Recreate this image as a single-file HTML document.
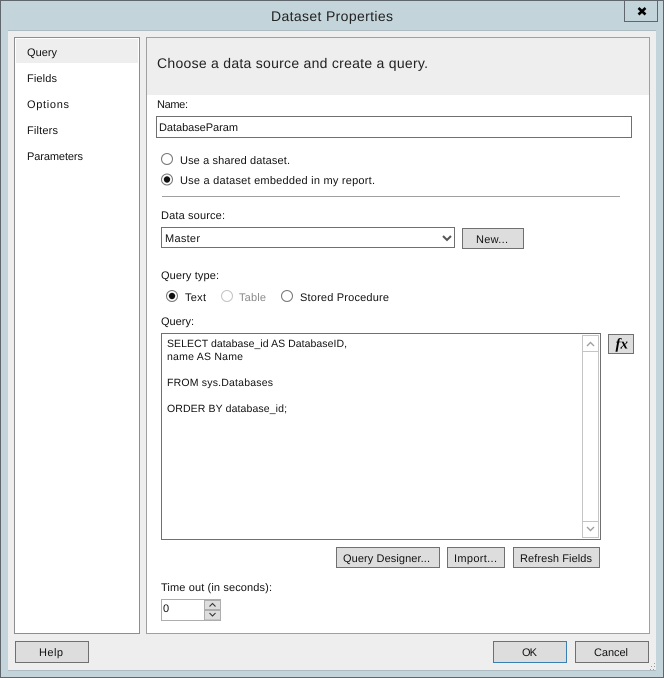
<!DOCTYPE html>
<html><head><meta charset="utf-8"><style>
html,body{margin:0;padding:0;background:#c3d5db}
svg{display:block}
text{font-family:"Liberation Sans",sans-serif;font-size:11px;fill:#111}
.t{font-size:14px;fill:#222}
.g{fill:#8a8a8a}
.b{fill:#ddd;stroke:#707070;stroke-width:1}
.f{fill:#fff;stroke:#707070;stroke-width:1}
</style></head><body>
<svg width="664" height="678" viewBox="0 0 664 678" xmlns="http://www.w3.org/2000/svg" text-rendering="geometricPrecision">
<rect x="0.5" y="0.5" width="663" height="677" fill="#c3d5db" stroke="#5f666c"/>
<rect x="8" y="30" width="648" height="640" fill="#eee"/>
<path d="M8 30.5H656M8 670.5H656" stroke="#aebcc2" fill="none"/>
<text class="t" x="271" y="21" textLength="122" lengthAdjust="spacing">Dataset Properties</text>
<rect x="624.5" y="0.5" width="33" height="21" fill="#c3d5db" stroke="#5f666c"/>
<path d="M638.500 8L645.500 14.500M645.500 8L638.500 14.500" stroke="#000" stroke-width="2.600" fill="none"/>

<rect x="14.5" y="37.5" width="125" height="596" fill="#fff" stroke="#8e8e8e"/>
<rect x="16" y="39" width="122" height="24" fill="#eee"/>
<text x="27" y="56" textLength="30">Query</text>
<text x="27" y="82" textLength="30">Fields</text>
<text x="27" y="108" textLength="42">Options</text>
<text x="27" y="134" textLength="31">Filters</text>
<text x="27" y="160" textLength="56">Parameters</text>

<rect x="146.5" y="37.5" width="503" height="596" fill="#fff" stroke="#a0a0a0"/>
<rect x="147" y="38" width="502" height="57" fill="#eee"/>
<text class="t" x="157" y="68" textLength="271" lengthAdjust="spacing">Choose a data source and create a query.</text>

<text x="157" y="108" textLength="31">Name:</text>
<rect class="f" x="156.5" y="116.5" width="475" height="21"/>
<text x="159" y="131" textLength="79">DatabaseParam</text>

<circle cx="167" cy="159" r="5.5" fill="#fff" stroke="#777"/>
<text x="180" y="164" textLength="110">Use a shared dataset.</text>
<circle cx="167" cy="179.500" r="5.500" fill="#fff" stroke="#777"/>
<circle cx="167" cy="179.500" r="3.200" fill="#111"/>
<text x="180" y="184" textLength="195">Use a dataset embedded in my report.</text>
<path d="M162 196.500H620" stroke="#a0a0a0"/>

<text x="161" y="219" textLength="64">Data source:</text>
<rect class="f" x="161.500" y="227.500" width="293" height="20"/>
<text x="165" y="242" textLength="35">Master</text>
<path d="M443 236L447 240L451 236" stroke="#555" stroke-width="2" fill="none"/>
<rect class="b" x="462.500" y="228.500" width="61" height="20"/>
<text x="476" y="243" textLength="32">New...</text>

<text x="161" y="279" textLength="58">Query type:</text>
<circle cx="172" cy="296" r="5.500" fill="#fff" stroke="#777"/>
<circle cx="172" cy="296" r="3.200" fill="#111"/>
<text x="185" y="301" textLength="21">Text</text>
<circle cx="227" cy="296" r="5.500" fill="#fff" stroke="#c4c4c4"/>
<text class="g" x="239" y="301" textLength="27">Table</text>
<circle cx="287" cy="296" r="5.500" fill="#fff" stroke="#777"/>
<text x="300" y="301" textLength="89">Stored Procedure</text>

<text x="161" y="325" textLength="33">Query:</text>
<rect class="f" x="161.500" y="333.500" width="439" height="206"/>
<text x="167" y="347" textLength="180" style="font-size:10.5px">SELECT database_id AS DatabaseID,</text>
<text x="167" y="360" textLength="76" style="font-size:10.5px">name AS Name</text>
<text x="167" y="386" textLength="106" style="font-size:10.5px">FROM sys.Databases</text>
<text x="167" y="412" textLength="120" style="font-size:10.5px">ORDER BY database_id;</text>

<rect x="582.500" y="335.500" width="16" height="202" fill="#fff" stroke="#c4c4c4"/>
<path d="M582.500 351.500H598.500M582.500 521.500H598.500" stroke="#c4c4c4"/>
<path d="M587 346L590.500 342.500L594 346" stroke="#a0a0a0" stroke-width="1.400" fill="none"/>
<path d="M587 527L590.500 530.500L594 527" stroke="#a0a0a0" stroke-width="1.400" fill="none"/>

<rect class="b" x="608.500" y="334.500" width="25" height="19"/>
<text x="615.500" y="348.500" style="font-family:'Liberation Serif',serif;font-weight:bold;font-style:italic;font-size:15px;fill:#000">fx</text>

<rect class="b" x="336.500" y="547.500" width="103" height="20"/>
<text x="343" y="562" textLength="87">Query Designer...</text>
<rect class="b" x="447.500" y="547.500" width="57" height="20"/>
<text x="454" y="562" textLength="43">Import...</text>
<rect class="b" x="513.500" y="547.500" width="86" height="20"/>
<text x="520" y="562" textLength="72">Refresh Fields</text>

<text x="161" y="591" textLength="111">Time out (in seconds):</text>
<rect x="161.500" y="599.500" width="59" height="21" fill="#fff" stroke="#adadad"/>
<text x="163" y="612" textLength="7">0</text>
<rect x="204" y="600" width="17" height="21" fill="#adadad"/>
<rect x="205" y="601" width="15" height="8" fill="#ddd"/>
<rect x="205" y="611" width="15" height="8.500" fill="#ddd"/>
<path d="M209.500 606.500L212.500 603.500L215.500 606.500M209.500 613L212.500 616L215.500 613" stroke="#333" stroke-width="1.100" fill="none"/>

<rect class="b" x="15.500" y="641.500" width="73" height="21"/>
<text x="39" y="656" textLength="24">Help</text>
<rect x="493.500" y="641.500" width="73" height="21" fill="#ddd" stroke="#3a7fb0"/>
<text x="522" y="656" textLength="15">OK</text>
<rect class="b" x="575.500" y="641.500" width="73" height="21"/>
<text x="594" y="656" textLength="34">Cancel</text>

<path d="M650 669h1v1h-1zM653 669h1v1h-1zM651 666h1v1h-1zM654 666h1v1h-1zM654 663h1v1h-1z" fill="#9a9a9a"/>
</svg>
</body></html>
